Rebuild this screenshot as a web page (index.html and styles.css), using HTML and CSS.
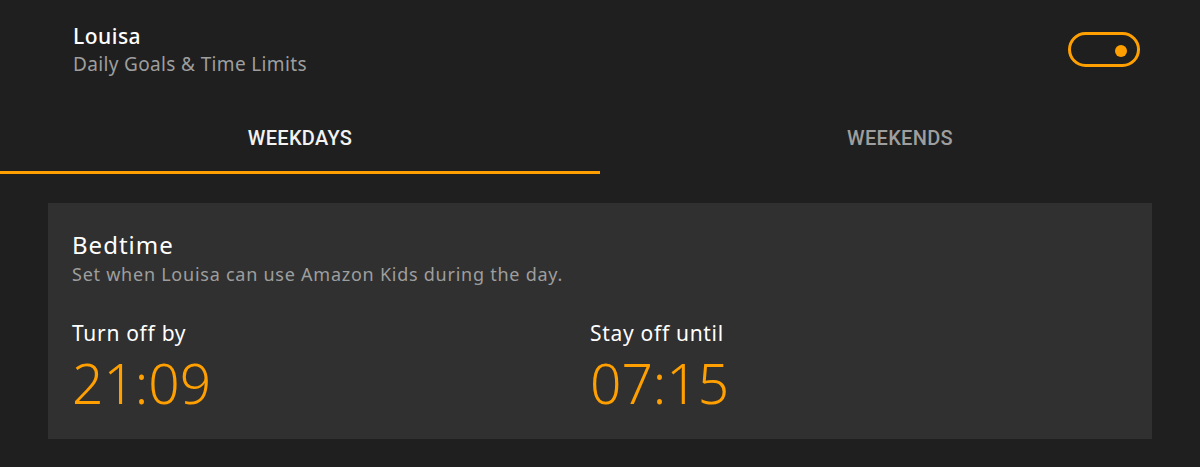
FILE: index.html
```html
<!DOCTYPE html>
<html>
<head>
<meta charset="utf-8">
<link rel="stylesheet" href="styles.css">
</head>
<body>
<div class="page">
  <header class="header">
    <div class="who">
      <div class="name">Louisa</div>
      <div class="sub">Daily Goals &amp; Time Limits</div>
    </div>
    <div class="toggle"><span class="knob"></span></div>
  </header>
  <nav class="tabs">
    <div class="tab active">WEEKDAYS</div>
    <div class="tab">WEEKENDS</div>
  </nav>
  <section class="card">
    <h2 class="card-title">Bedtime</h2>
    <p class="card-sub">Set when Louisa can use Amazon Kids during the day.</p>
    <div class="times">
      <div class="time">
        <div class="time-label">Turn off by</div>
        <div class="time-value">21:09</div>
      </div>
      <div class="time">
        <div class="time-label">Stay off until</div>
        <div class="time-value">07:15</div>
      </div>
    </div>
  </section>
</div>
</body>
</html>
```

FILE: styles.css
```css
* { box-sizing: border-box; }
html, body {
  margin: 0;
  padding: 0;
  background: #1f1f1f;
  height: 100%;
}
body {
  font-family: "Noto Sans", "Open Sans", sans-serif;
  color: #fff;
}
.page {
  width: 1200px;
  height: 467px;
  overflow: hidden;
}
.header {
  display: flex;
  justify-content: space-between;
  align-items: flex-start;
  padding: 22px 60px 0 73px;
  height: 84px;
}
.name {
  font-size: 21px;
  line-height: 28px;
  font-weight: 500;
  letter-spacing: 0.5px;
  color: #fff;
}
.sub {
  font-size: 19px;
  line-height: 24px;
  letter-spacing: 0.35px;
  color: #9e9e9e;
  margin-top: 2px;
}
.toggle {
  width: 72px;
  height: 35px;
  border: 3px solid #ffa000;
  border-radius: 18px;
  margin-top: 10px;
  position: relative;
}
.knob {
  position: absolute;
  right: 10px;
  top: 10px;
  width: 12px;
  height: 12px;
  border-radius: 50%;
  background: #ffa000;
}
.tabs {
  display: flex;
  height: 90px;
}
.tab {
  flex: 1;
  text-align: center;
  font-family: Roboto, sans-serif;
  font-weight: 500;
  font-size: 20px;
  letter-spacing: 0.3px;
  color: #9e9e9e;
  padding-top: 42px;
  line-height: 24px;
}
.tab.active {
  color: #f2f2f2;
  border-bottom: 3px solid #ffa000;
}
.card {
  margin: 29px 48px 0;
  height: 236px;
  background: #303030;
  padding: 27px 24px 0;
}
.card-title {
  margin: 0;
  font-size: 24px;
  line-height: 30px;
  font-weight: 400;
  letter-spacing: 1px;
  color: #fff;
}
.card-sub {
  margin: 3px 0 0;
  font-size: 18px;
  line-height: 22px;
  letter-spacing: 0.75px;
  color: #9e9e9e;
}
.times {
  display: grid;
  grid-template-columns: 518px 1fr;
  margin-top: 36px;
}
.time-label {
  font-size: 21px;
  line-height: 24px;
  letter-spacing: 0.7px;
  color: #fff;
}
.time-value {
  font-size: 55px;
  line-height: 75px;
  font-weight: 300;
  color: #ffa000;
}
```
